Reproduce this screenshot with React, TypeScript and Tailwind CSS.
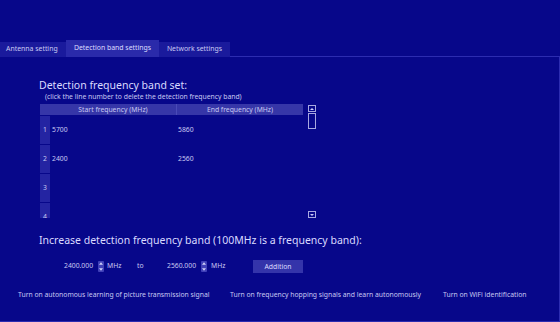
import React from 'react';

const rows = [
  { n: 1, start: '5700', end: '5860' },
  { n: 2, start: '2400', end: '2560' },
  { n: 3, start: '', end: '' },
  { n: 4, start: '', end: '' },
];

const tabs = ['Antenna setting', 'Detection band settings', 'Network settings'];

function Spin() {
  return (
    <div className="flex h-[11px] w-[6px] flex-col items-center justify-between rounded-[1px] bg-[#4040b8] py-[1px]">
      <svg viewBox="0 0 6 4" className="h-[3px] w-[4px]">
        <path d="M0 4 L3 0 L6 4 Z" fill="#d0d0f8" />
      </svg>
      <svg viewBox="0 0 6 4" className="h-[3px] w-[4px]">
        <path d="M0 0 L3 4 L6 0 Z" fill="#d0d0f8" />
      </svg>
    </div>
  );
}

export default function App() {
  return (
    <div
      className="flex h-[322px] w-[560px] flex-col overflow-hidden whitespace-nowrap bg-[#07078a] text-[#c9c9f2]"
      style={{ fontFamily: '"Noto Sans", "Open Sans", sans-serif' }}
    >
      {/* Tabs */}
      <div className="mt-[40px] flex h-[17px] items-end">
        {tabs.map((t, i) => (
          <div
            key={t}
            className={`flex items-center text-[6.9px] ${
              i === 1 ? 'h-[17px] bg-[#2a2aaa] text-[#dcdcff]' : 'h-[15px] bg-[#1a1a9c]'
            } ${i === 0 ? 'w-[66px] pl-[6px]' : i === 1 ? 'w-[93px] justify-center' : 'w-[71px] justify-center'}`}
          >
            {t}
          </div>
        ))}
        <div className="flex-1 border-b border-[#2c2cb0]" />
      </div>

      {/* Pane */}
      <div className="flex flex-1 flex-col border-r border-b border-[#2c2cb0] pl-[39px]">
        <div className="mt-[22px] text-[10.5px] leading-[13px] text-[#dadaff]">Detection frequency band set:</div>
        <div className="ml-[6px] text-[6.8px] leading-[10px]">
          (click the line number to delete the detection frequency band)
        </div>

        <div className="mt-[2px] ml-[1px] flex gap-[4px]">
          <div className="flex h-[114px] w-[263px] flex-col overflow-hidden">
            <div className="flex h-[11px] shrink-0 bg-[#3636a8] text-[6.8px] leading-[11px]">
              <div className="w-[10px]" />
              <div className="w-[127px] border-r border-[#4a4ab8] text-center">Start frequency (MHz)</div>
              <div className="flex-1 text-center">End frequency (MHz)</div>
            </div>
            {rows.map((r) => (
              <div key={r.n} className="flex h-[29px] shrink-0 border-t border-[#07078a] text-[6.8px]">
                <div className="flex w-[10px] items-center justify-center bg-[#2424a2]">{r.n}</div>
                <div className="flex w-[127px] items-center pl-[2px]">{r.start}</div>
                <div className="flex flex-1 items-center pl-[1px]">{r.end}</div>
              </div>
            ))}
          </div>

          {/* Scrollbar */}
          <div className="flex h-[115px] w-[9px] flex-col items-center justify-between pt-[1px] pb-[1px]">
            <div className="flex w-[9px] flex-col items-center">
              <div className="flex h-[7px] w-[8px] items-center justify-center border border-[#a8a8e0]">
                <svg viewBox="0 0 4 2" className="h-[2px] w-[4px]">
                  <path d="M0 2 L2 0 L4 2 Z" fill="#d0d0ff" />
                </svg>
              </div>
              <div className="mt-[1px] h-[16px] w-[8px] border border-[#a8a8e0]" />
            </div>
            <div className="flex h-[7px] w-[8px] items-center justify-center border border-[#a8a8e0]">
              <svg viewBox="0 0 4 2" className="h-[2px] w-[4px]">
                <path d="M0 0 L2 2 L4 0 Z" fill="#d0d0ff" />
              </svg>
            </div>
          </div>
        </div>

        <div className="mt-[15px] text-[10.5px] leading-[13px] text-[#dadaff]">
          Increase detection frequency band (100MHz is a frequency band):
        </div>

        <div className="mt-[12px] flex h-[14px] items-center text-[6.8px]">
          <span className="ml-[25px] w-[34px]">2400.000</span>
          <Spin />
          <span className="ml-[3px] w-[30px]">MHz</span>
          <span className="w-[30px]">to</span>
          <span className="w-[34px]">2560.000</span>
          <Spin />
          <span className="ml-[4px] w-[42px]">MHz</span>
          <button className="h-[13px] w-[50px] bg-[#3434aa] text-center text-[6.8px] leading-[13px] text-[#dcdcff]">
            Addition
          </button>
        </div>

        <div className="-ml-[39px] mt-[17px] flex text-[6.8px]">
          <span className="ml-[18px] w-[212px]">Turn on autonomous learning of picture transmission signal</span>
          <span className="w-[213px]">Turn on frequency hopping signals and learn autonomously</span>
          <span>Turn on WiFi identification</span>
        </div>
      </div>
    </div>
  );
}
